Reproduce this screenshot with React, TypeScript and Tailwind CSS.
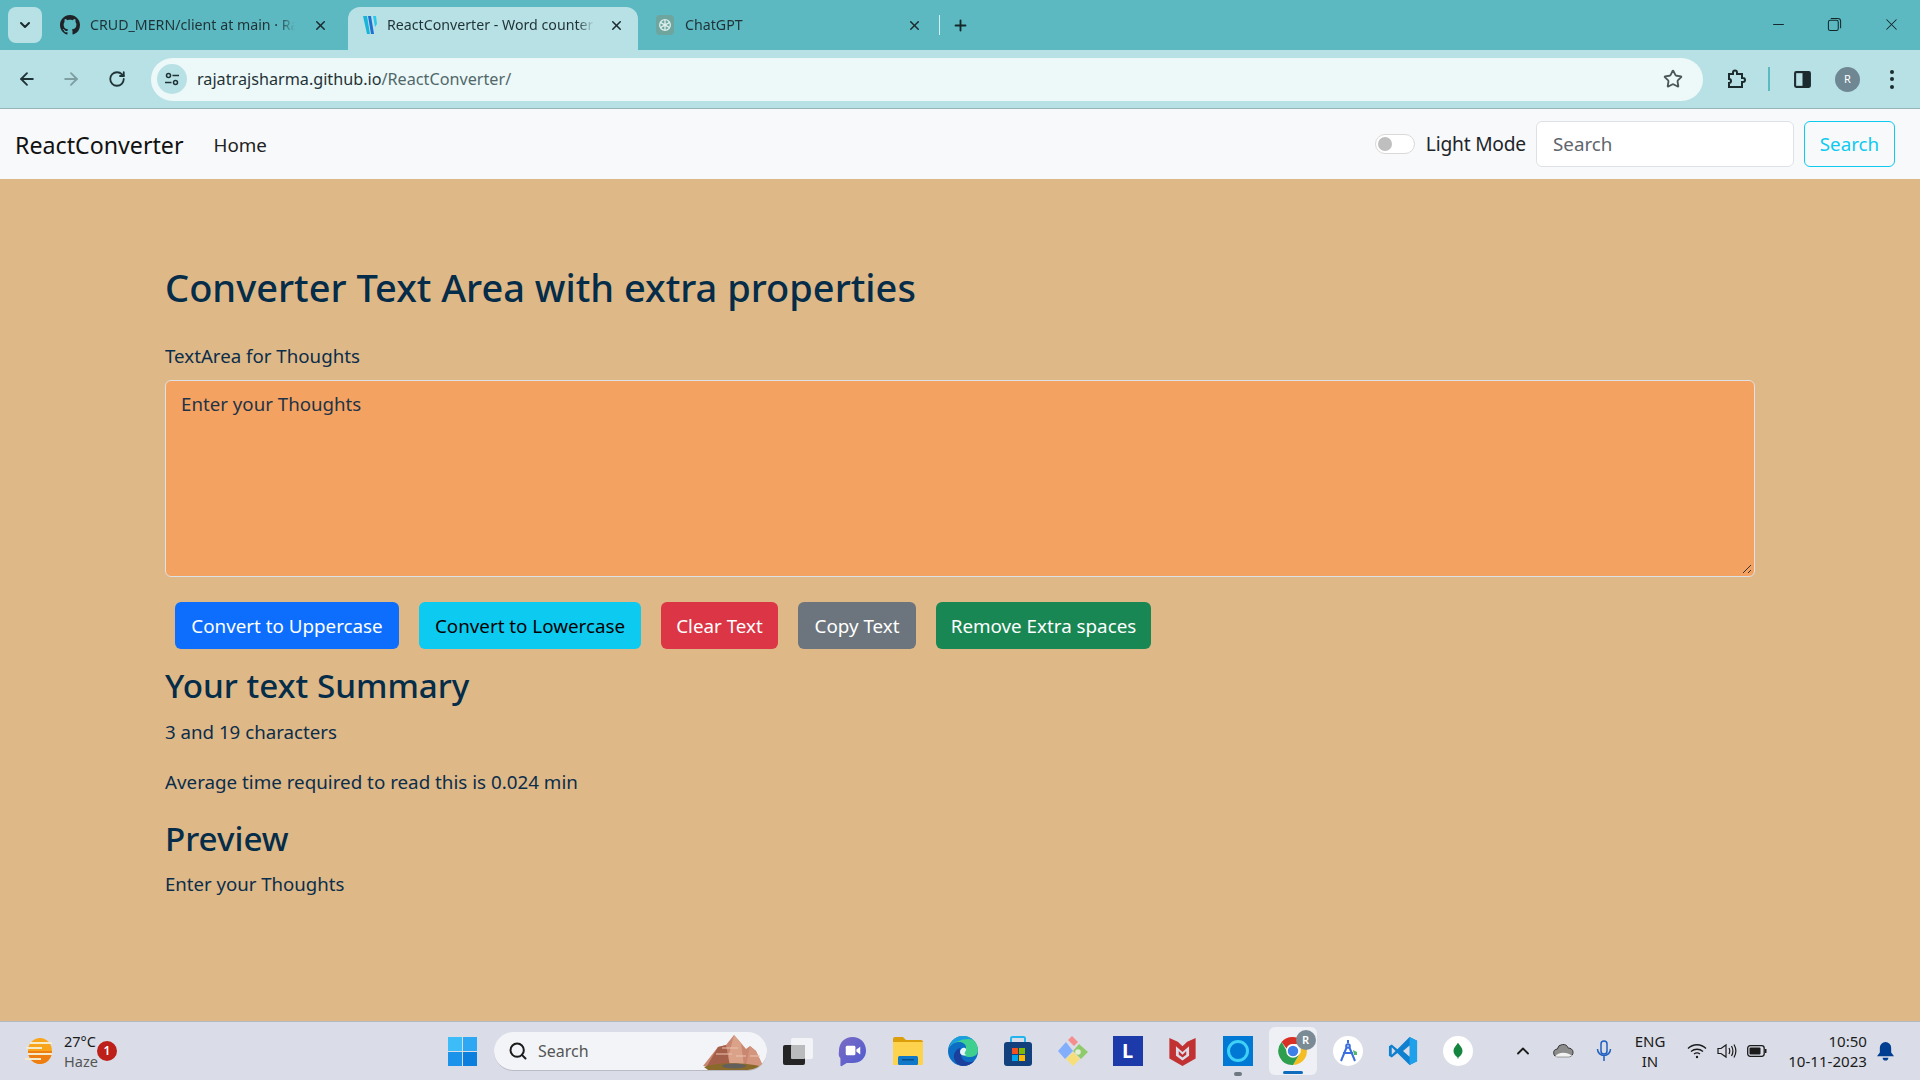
import React from 'react'
import { ArrowLeft, ArrowRight, ChevronDown, ChevronUp, Minus, Plus, RotateCw, Search, Star, X } from 'lucide-react'

const font = 'font-["Noto_Sans","Open_Sans",sans-serif]'

function GithubMark() {
  return (
    <svg viewBox="0 0 16 16" className="w-5 h-5" fill="#1f2328">
      <path d="M8 0C3.58 0 0 3.58 0 8c0 3.54 2.29 6.53 5.47 7.59.4.07.55-.17.55-.38 0-.19-.01-.82-.01-1.49-2.01.37-2.53-.49-2.69-.94-.09-.23-.48-.94-.82-1.13-.28-.15-.68-.52-.01-.53.63-.01 1.08.58 1.23.82.72 1.21 1.87.87 2.33.66.07-.52.28-.87.51-1.07-1.78-.2-3.64-.89-3.64-3.95 0-.87.31-1.59.82-2.15-.08-.2-.36-1.02.08-2.12 0 0 .67-.21 2.2.82.64-.18 1.32-.27 2-.27s1.36.09 2 .27c1.53-1.04 2.2-.82 2.2-.82.44 1.1.16 1.92.08 2.12.51.56.82 1.27.82 2.15 0 3.07-1.87 3.75-3.65 3.95.29.25.54.73.54 1.48 0 1.07-.01 1.93-.01 2.2 0 .21.15.46.55.38A8.01 8.01 0 0 0 16 8c0-4.42-3.58-8-8-8z" />
    </svg>
  )
}

function Tab({ title, icon, active, cls }: { title: string; icon: React.ReactNode; active?: boolean; cls: string }) {
  return (
    <div className={`${cls} h-[43px] pb-[7px] flex items-center rounded-t-xl ${active ? 'bg-[#b8e1e5]' : ''}`}>
      <div className="w-5 h-5 flex items-center justify-center shrink-0">{icon}</div>
      <span className="flex-1 overflow-hidden whitespace-nowrap text-[14.200px] text-[#1f3337] [mask-image:linear-gradient(to_right,black_92%,transparent)]">{title}</span>
      <X size={15} strokeWidth={2.4} className="ml-2 text-[#1b2b2e] shrink-0" />
    </div>
  )
}

function TaskIcon({ children, active }: { children: React.ReactNode; active?: boolean }) {
  return (
    <div className="w-[55px] h-[48px] flex items-center justify-center">
      <div className={`relative w-[48px] h-[48px] flex items-center justify-center ${active ? 'rounded-md bg-[#eef0f5]' : ''}`}>
        {children}
        {active && <div className="absolute bottom-[1px] left-1/2 -translate-x-1/2 w-5 h-[3px] rounded bg-[#0f6cbd]" />}
      </div>
    </div>
  )
}

function ChromeIcon() {
  return (
    <svg viewBox="0 0 32 32" className="w-8 h-8">
      <path d="M16 2a14 14 0 0 1 12.100 7H16a7 7 0 0 0-6.500 4.400L4.600 7A14 14 0 0 1 16 2z" fill="#d93025" />
      <path d="M28.100 9A14 14 0 0 1 16 30l6-10.200A7 7 0 0 0 22 10z" fill="#f4bd22" />
      <path d="M4.600 7l6.300 11a7 7 0 0 0 11.100 1.800L16 30A14 14 0 0 1 4.600 7z" fill="#2e9e4f" />
      <circle cx="16" cy="16" r="6" fill="#3f7fe8" stroke="#fff" strokeWidth="1.500" />
    </svg>
  )
}

function TaskbarIcons() {
  return (
    <div className="flex items-center ml-[3px]">
      <TaskIcon>
        <svg viewBox="0 0 30 30" className="w-[30px] h-[30px]">
          <rect x="8" y="2" width="22" height="21" rx="2" fill="#f2f3f6" />
          <rect x="0" y="9" width="22" height="20" rx="2" fill="#252525" />
          <rect x="8" y="9" width="14" height="14" rx="1" fill="#b9bbbd" />
        </svg>
      </TaskIcon>
      <TaskIcon>
        <svg viewBox="0 0 30 32" className="w-[29px] h-[31px]">
          <defs>
            <linearGradient id="chatg" x1="0" y1="0" x2="1" y2="1">
              <stop offset="0" stopColor="#7b6cc4" />
              <stop offset="1" stopColor="#4f5bd0" />
            </linearGradient>
          </defs>
          <path d="M15 1c8 0 14 6 14 14s-6 13-14 13H9l-5 3c-1 .5-1.500 0-1.500-1V23C0 20 1 18 1 15 1 7 7 1 15 1z" fill="url(#chatg)" />
          <rect x="8" y="10" width="10" height="10" rx="1.500" fill="#fff" />
          <path d="M19 14l4-3v8l-4-3z" fill="#fff" />
        </svg>
      </TaskIcon>
      <TaskIcon>
        <svg viewBox="0 0 30 30" className="w-[30px] h-[30px]">
          <path d="M0 3a2 2 0 0 1 2-2h8l3 3h15a2 2 0 0 1 2 2v3H0z" fill="#dc9e0a" />
          <path d="M0 6h30v22a1 1 0 0 1-1 1H1a1 1 0 0 1-1-1z" fill="#fdd34d" />
          <rect x="5" y="20" width="20" height="9" rx="1.500" fill="#0f78c9" />
          <rect x="9" y="23" width="12" height="1.500" fill="#06508e" />
        </svg>
      </TaskIcon>
      <TaskIcon>
        <svg viewBox="0 0 32 32" className="w-8 h-8">
          <circle cx="16" cy="16" r="15" fill="#0d6fc4" />
          <path d="M2 13C4 5 10 1 16 1c8 0 15 6 15 14 0 5-4 7-8 7-5 0-7-2-7-4 0-3 3-3 3-6 0-3-4-5-7-5C8 7 4 9 2 13z" fill="#3fcf8e" />
          <path d="M2 13C4 5 10 1 16 1c4 0 8 2 10 4-4-2-11-1-14 1C8 7 4 9 2 13z" fill="#1b9de2" />
          <path d="M14 19c0 5 4 9 10 8 2-.3 3-1 4-2-3 4-7 6-12 6-4 0-8-3-9-8-1-5 3-10 7-10-2 1-1 2-1 3z" fill="#1a3f9c" />
          <path d="M13 17c0-3 3-5 5-4 2 1 1 3 0 4-1 1 0 3 2 3-4 1-7 0-7-3z" fill="#e8f4fb" />
        </svg>
      </TaskIcon>
      <TaskIcon>
        <svg viewBox="0 0 30 32" className="w-[30px] h-8">
          <path d="M8 8V3.500A1.500 1.500 0 0 1 9.500 2h11A1.500 1.500 0 0 1 22 3.500V8" fill="none" stroke="#24b5ef" strokeWidth="2" />
          <rect x="1" y="7" width="28" height="24" rx="3" fill="#12417d" />
          <rect x="9" y="13" width="6" height="6" fill="#f25022" />
          <rect x="16" y="13" width="6" height="6" fill="#7fba00" />
          <rect x="9" y="20" width="6" height="6" fill="#00a4ef" />
          <rect x="16" y="20" width="6" height="6" fill="#ffb900" />
        </svg>
      </TaskIcon>
      <TaskIcon>
        <svg viewBox="0 0 32 32" className="w-8 h-8">
          <path d="M1 16l8-9 7 9-8 8z" fill="#82aefc" />
          <path d="M11 5l4-4 6 6-4 4z" fill="#f58d8d" />
          <path d="M16 16l6-7 9 8-7 7z" fill="#8fcb6a" />
          <path d="M9 24l7-7 7 7-7 7z" fill="#f6df7a" />
          <circle cx="21" cy="17" r="2.800" fill="#e4ecd8" />
        </svg>
      </TaskIcon>
      <TaskIcon>
        <div className="w-[30px] h-[30px] bg-[#1c3aa9] flex items-center justify-center">
          <span className={`${font} text-white font-bold text-[20px] leading-none`}>L</span>
        </div>
      </TaskIcon>
      <TaskIcon>
        <svg viewBox="0 0 28 32" className="w-[27px] h-[30px]">
          <path d="M0 2l9 4 5 5 5-5 9-4v22l-14 8-14-8z" fill="#c23232" />
          <path d="M7 11l7 6 7-6v10l-7 5-7-5z" fill="#dcdfe8" />
          <path d="M10 16l4 4 4-4v4l-4 3-4-3z" fill="#c23232" />
        </svg>
      </TaskIcon>
      <div className="relative">
        <TaskIcon>
          <div className="w-[30px] h-[30px] bg-[#0078d4] flex items-center justify-center">
            <div className="w-[22px] h-[22px] rounded-full border-[3px] border-[#3fd0f5]" />
          </div>
        </TaskIcon>
        <div className="absolute -bottom-[1px] left-1/2 -translate-x-1/2 w-2 h-1 rounded bg-[#6f7780]" />
      </div>
      <TaskIcon active>
        <ChromeIcon />
        <div className="absolute top-[3px] right-[1px] w-5 h-5 rounded-full bg-[#7b8b96] text-white text-[11px] font-['Noto_Sans'] font-semibold flex items-center justify-center">R</div>
      </TaskIcon>
      <TaskIcon>
        <div className="w-[30px] h-[30px] rounded-full bg-white flex items-center justify-center">
          <svg viewBox="0 0 24 24" className="w-[24px] h-[24px]" fill="none" stroke="#3b6fe0" strokeWidth="2">
            <path d="M12 5L5 22M12 5l7 17M7 14h10" />
            <circle cx="12" cy="7" r="1.800" fill="#fff" />
            <path d="M12 1v3" />
            <path d="M17 11l4 2v3h-3z" fill="#53b96a" stroke="none" />
          </svg>
        </div>
      </TaskIcon>
      <TaskIcon>
        <svg viewBox="0 0 32 32" className="w-[30px] h-[30px]">
          <path d="M23 1l8 4v22l-8 4L10 18l-6 5-3-2v-10l3-2 6 5z" fill="#0f7fcf" />
          <path d="M23 1l8 4v22l-8 4z" fill="#1fa0ea" />
          <path d="M23 10l-7 6 7 6z" fill="#dadde7" />
          <path d="M4 12l4 4-4 4z" fill="#dadde7" />
        </svg>
      </TaskIcon>
      <TaskIcon>
        <div className="w-[30px] h-[30px] rounded-full bg-white flex items-center justify-center">
          <svg viewBox="0 0 16 24" className="w-3 h-[20px]">
            <path d="M8 1c3 4 6 7 6 11s-3 7-5 8l-1 3-1-3c-2-1-5-4-5-8s3-7 6-11z" fill="#13853f" />
          </svg>
        </div>
      </TaskIcon>
    </div>
  )
}

export default function App() {
  const buttons = [
    { label: 'Convert to Uppercase', cls: 'bg-[#0d6efd] text-white w-[224px]' },
    { label: 'Convert to Lowercase', cls: 'bg-[#0dcaf0] text-black w-[222px]' },
    { label: 'Clear Text', cls: 'bg-[#dc3545] text-white w-[117px]' },
    { label: 'Copy Text', cls: 'bg-[#6c757d] text-white w-[118px]' },
    { label: 'Remove Extra spaces', cls: 'bg-[#198754] text-white w-[215px]' },
  ]

  return (
    <div className={`${font} w-[1920px] h-[1080px] overflow-hidden flex flex-col bg-[#deb887]`}>
      {/* tab strip */}
      <div className="h-[50px] bg-[#5cb8c1] flex items-end pl-2 shrink-0">
        <div className="w-[34px] h-[36px] mb-[7px] rounded-lg bg-[#b8e1e5] flex items-center justify-center">
          <ChevronDown size={16} strokeWidth={3} className="text-[#1b2b2e]" />
        </div>
        <Tab cls="ml-1.5 w-[300px] pl-3 pr-[20px] gap-2.5" title="CRUD_MERN/client at main · Rajat" icon={<GithubMark />} />
        <Tab
          active
          cls="w-[290px] pl-3 pr-[14px] gap-[7px]"
          title="ReactConverter - Word counter"
          icon={
            <svg viewBox="0 0 16 20" className="w-4 h-5">
              <path d="M1 1l4 0 3 18-3 0z" fill="#19b5d8" />
              <path d="M6 1h3l3 18-3 0z" fill="#1f6fd0" />
              <path d="M11 1h3l1 8-2 3z" fill="#2dc9e8" />
            </svg>
          }
        />
        <Tab
          cls="w-[297px] pl-[17px] pr-[13px] gap-[10px]"
          title="ChatGPT"
          icon={
            <div className="w-[18px] h-5 rounded bg-[#6fa59f] flex items-center justify-center">
              <svg viewBox="0 0 24 24" className="w-4 h-4" fill="none" stroke="#dcefec" strokeWidth="2">
                <circle cx="12" cy="12" r="8" />
                <path d="M12 4v16M5 8l14 8M19 8L5 16" />
              </svg>
            </div>
          }
        />
        <div className="w-px h-5 bg-[#d5eef0] mb-[15px] ml-[4px]" />
        <Plus size={17} strokeWidth={2.6} className="mb-[16px] ml-3 text-[#14282b]" />
        <div className="ml-auto flex items-center h-[50px] pb-[2px]">
          <div className="w-[56px] flex justify-center"><Minus size={17} strokeWidth={1.4} className="text-[#14282b]" /></div>
          <div className="w-[56px] flex justify-center">
            <svg viewBox="0 0 16 16" className="w-[15px] h-[15px]" fill="none" stroke="#14282b" strokeWidth="1.100">
              <rect x="1.500" y="3.500" width="10.500" height="11" rx="2" />
              <path d="M4 1.500h7.500a3 3 0 0 1 3 3V12" />
            </svg>
          </div>
          <div className="w-[58px] flex justify-center"><X size={19} strokeWidth={1.3} className="text-[#14282b]" /></div>
        </div>
      </div>

      {/* toolbar */}
      <div className="h-[59px] shrink-0 bg-[#b8e1e5] border-b border-[#94b5b8] flex items-center pl-[17px] relative">
        <ArrowLeft size={20} strokeWidth={2.2} className="text-[#1f3337]" />
        <ArrowRight size={20} strokeWidth={2.2} className="ml-6 text-[#7f9ea1]" />
        <RotateCw size={18} strokeWidth={2.4} className="ml-[27px] text-[#1f3337]" />
        <div className="ml-[25px] w-[1552px] h-[43px] rounded-full bg-[#edf8f8] flex items-center pl-1.5 pr-[20px]">
          <div className="w-[30px] h-[30px] rounded-full bg-[#b8e1e5] flex items-center justify-center">
            <svg viewBox="0 0 16 16" className="w-4 h-4" fill="none" stroke="#1f3337" strokeWidth="1.500">
              <circle cx="4.500" cy="4.500" r="2" />
              <path d="M8.500 4.500H15M1 11.500h6.500" />
              <circle cx="11.500" cy="11.500" r="2" />
            </svg>
          </div>
          <span className="ml-2.5 mt-px text-[16.200px] text-[#1f3337] leading-none">rajatrajsharma.github.io<span className="text-[#51686b]">/ReactConverter/</span></span>
          <Star size={20} strokeWidth={2.2} className="ml-auto text-[#4c5759]" />
        </div>
        <div className="ml-[22px] w-[22px] flex justify-center">
          <svg viewBox="0 0 20 20" className="w-[20px] h-[20px]" fill="none" stroke="#1b2b2e" strokeWidth="2">
            <path d="M3 5h4V3.500a2 2 0 0 1 4 0V5h5v4h1a2 2 0 0 1 0 4h-1v5H3v-4a2 2 0 0 0 0-4z" />
          </svg>
        </div>
        <div className="ml-[21px] w-0.5 h-6 bg-[#5cb8c1]" />
        <svg viewBox="0 0 18 18" className="ml-[23px] w-[19px] h-[19px]">
          <rect x="1" y="1" width="16" height="16" rx="2" fill="#1b2b2e" />
          <rect x="3" y="3" width="6" height="12" fill="#b8e1e5" />
        </svg>
        <div className="ml-[23px] w-[25px] h-[25px] rounded-full bg-[#6f8793] text-white text-[11px] flex items-center justify-center">R</div>
        <div className="ml-[30px] flex flex-col gap-[3.500px]">
          <div className="w-1 h-1 rounded-full bg-[#1b2b2e]" />
          <div className="w-1 h-1 rounded-full bg-[#1b2b2e]" />
          <div className="w-1 h-1 rounded-full bg-[#1b2b2e]" />
        </div>
      </div>

      {/* navbar */}
      <nav className="h-[70px] shrink-0 bg-[#f8f9fa] flex items-center pl-[15px] pr-[25px]">
        <span className="mt-[2px] text-[23.200px] text-[#111]">ReactConverter</span>
        <span className="ml-[30px] mt-[2px] text-[18.800px] text-[#222]">Home</span>
        <div className="ml-auto flex items-center">
          <div className="w-[40px] h-[20px] rounded-full bg-white border border-[#d9d9d9] flex items-center pl-[2px]">
            <div className="w-[14px] h-[14px] rounded-full bg-[#bfbfbf]" />
          </div>
          <span className="ml-[11px] text-[19.200px] text-[#212529] tracking-[-0.2px]">Light Mode</span>
          <div className="ml-[10px] w-[258px] h-[46px] bg-white border border-[#dee2e6] rounded-md flex items-center px-4 text-[18.800px] text-[#5f666d]">Search</div>
          <div className="ml-[10px] w-[91px] h-[46px] border border-[#0dcaf0] rounded-md flex items-center justify-center text-[18.800px] text-[#0dcaf0]">Search</div>
        </div>
      </nav>

      {/* page */}
      <main className="flex-1 px-[165px] pt-[83px] text-[#0b2d4a]">
        <h1 className="text-[38px] leading-[50px] font-medium text-[#052c48]">Converter Text Area with extra properties</h1>
        <p className="mt-[30px] text-[18.700px] leading-[28px]">TextArea for Thoughts</p>
        <div className="mt-[10px] h-[197px] rounded-md border border-[#dee2e6] bg-[#f4a261] px-[15px] py-[9px] text-[18.700px] text-[#1f3347] relative">
          Enter your Thoughts
          <svg viewBox="0 0 12 12" className="absolute right-[2px] bottom-[2px] w-3 h-3" stroke="#333" strokeWidth="1">
            <path d="M11 3L3 11M11 8l-3 3" />
          </svg>
        </div>
        <div className="mt-[25px] ml-[10px] flex gap-5">
          {buttons.map((b) => (
            <button key={b.label} className={`${b.cls} h-[47px] pt-px rounded-md text-[18.800px] flex items-center justify-center whitespace-nowrap`}>
              {b.label}
            </button>
          ))}
        </div>
        <h2 className="mt-[13px] text-[33.200px] leading-[48px] font-medium text-[#052c48]">Your text Summary</h2>
        <p className="mt-[7px] text-[18.700px] leading-[30px]">3 and 19 characters</p>
        <p className="mt-[20px] text-[18.800px] leading-[30px]">Average time required to read this is 0.024 min</p>
        <h2 className="mt-[18px] text-[33.200px] leading-[48px] font-medium text-[#052c48]">Preview</h2>
        <p className="mt-[6px] text-[18.600px] leading-[30px]">Enter your Thoughts</p>
      </main>

      {/* windows taskbar */}
      <footer className="h-[59px] shrink-0 bg-[#dadde7] border-t border-[#b6b8c2] flex items-center pl-[25px] relative">
        <svg viewBox="0 0 30 30" className="w-[30px] h-[30px]">
          <ellipse cx="15" cy="15" rx="12" ry="13" fill="#f8a51b" />
          <path d="M3 15a12 13 0 0 0 24 0z" fill="#ee7d12" />
          <path d="M5 7h22M1 12h16M3 18h24M0 23h16" stroke="#f4ebcd" strokeWidth="2" />
        </svg>
        <div className="ml-[9px] w-[38px] text-[14.500px] leading-[20px] whitespace-nowrap">
          <div className="text-[#1b1b1b]">27°C</div>
          <div className="text-[#555]">Haze</div>
        </div>
        <div className="-ml-[5px] w-5 h-5 rounded-full bg-[#bd1f1a] text-white text-[12px] font-semibold flex items-center justify-center">1</div>
        {/* start + search */}
        <div className="ml-[331px] w-[29px] h-[29px] grid grid-cols-2 gap-px">
          <div className="bg-[#3dbdf7]" />
          <div className="bg-[#2ea8f2]" />
          <div className="bg-[#1b93ea]" />
          <div className="bg-[#0a7fdd]" />
        </div>
        <div className="ml-[17px] w-[273px] h-[39px] rounded-full bg-[#f3f4f8] border-b border-[#b8bac4] flex items-center pl-[14px] relative overflow-hidden">
          <Search size={20} strokeWidth={2.4} className="text-[#1b1b1b]" />
          <span className="ml-[10px] text-[16px] text-[#555]">Search</span>
          <svg viewBox="0 0 62 36" className="absolute right-[3px] bottom-0 w-[62px] h-[36px]">
            <path d="M1 32L16 13l8-2 8-10 7 8 5 6 4-3 6 5 7 15z" fill="#c98670" />
            <path d="M32 1l7 8 3 23H24z" fill="#dba28a" />
            <path d="M16 13l8-2 4 21H5z" fill="#a45f4b" />
            <path d="M48 12l6 5 7 15H44z" fill="#d3957e" />
            <path d="M14 20h16M20 14h16M34 22h10M48 22h10" stroke="#eec4ae" strokeWidth="1" />
            <path d="M2 33c12-5 44-5 58 0l-2 3H6z" fill="#8a6a2a" />
            <ellipse cx="32" cy="32" rx="12" ry="2.500" fill="#62605c" />
          </svg>
        </div>
        <TaskbarIcons />
        {/* system tray */}
        <div className="ml-auto flex items-center pr-[26px]">
          <ChevronUp size={20} strokeWidth={2.2} className="text-[#1b1b1b]" />
          <svg viewBox="0 0 22 14" className="ml-[20px] w-[21px] h-[14px]">
            <path d="M5 13a4 4 0 0 1-.5-8A6 6 0 0 1 16 4a4.500 4.500 0 0 1 1 9z" fill="#8c8c8c" stroke="#333" strokeWidth="1" />
            <path d="M2 13c3-5 12-6 18-1l-3 1z" fill="#f2f2f2" />
          </svg>
          <svg viewBox="0 0 16 22" className="ml-[22px] w-[16px] h-[22px]" fill="none" stroke="#1f5fbf" strokeWidth="1.500">
            <rect x="5" y="1" width="6" height="13" rx="3" />
            <path d="M1.500 9a6.500 6.500 0 0 0 13 0M8 16v5" />
          </svg>
          <div className="ml-[20px] w-[36px] text-center text-[15px] leading-[20px] text-[#1b1b1b]">ENG<br />IN</div>
          <svg viewBox="0 0 20 16" className="ml-[19px] w-5 h-4" fill="none" stroke="#1b1b1b" strokeWidth="1.300">
            <path d="M1 5.500c5-5 13-5 18 0M4 8.500c3.500-3 8.500-3 12 0M7 11c2-1.500 4-1.500 6 0" />
            <circle cx="10" cy="14" r="1.200" fill="#1b1b1b" stroke="none" />
          </svg>
          <svg viewBox="0 0 20 16" className="ml-[10px] w-5 h-4" fill="none" stroke="#1b1b1b" strokeWidth="1.200">
            <path d="M1 5.500h3L9 2v12l-5-3.500H1zM12 5c1 2 1 4 0 6M14.500 3c1.700 3 1.700 7 0 10M17 1.500c2.300 4 2.300 9 0 13" />
          </svg>
          <svg viewBox="0 0 20 12" className="ml-[10px] w-5 h-3">
            <rect x="0.700" y="0.700" width="16.500" height="10.600" rx="2.500" fill="none" stroke="#1b1b1b" strokeWidth="1.300" />
            <rect x="2.500" y="2.500" width="11" height="7" rx="1" fill="#1b1b1b" />
            <rect x="18" y="4" width="1.500" height="4" fill="#1b1b1b" />
          </svg>
          <div className="ml-[19px] w-[81px] text-right text-[15.100px] leading-[20px] text-[#1b1b1b] whitespace-nowrap">10:50<br />10-11-2023</div>
          <svg viewBox="0 0 18 20" className="ml-[10px] w-[17px] h-[19px]" fill="#003e92">
            <path d="M9 0a6 6 0 0 1 6 6v5l3 4H0l3-4V6a6 6 0 0 1 6-6z" />
            <path d="M6 16.500h6a3 3 0 0 1-6 0z" />
          </svg>
        </div>
      </footer>
    </div>
  )
}
